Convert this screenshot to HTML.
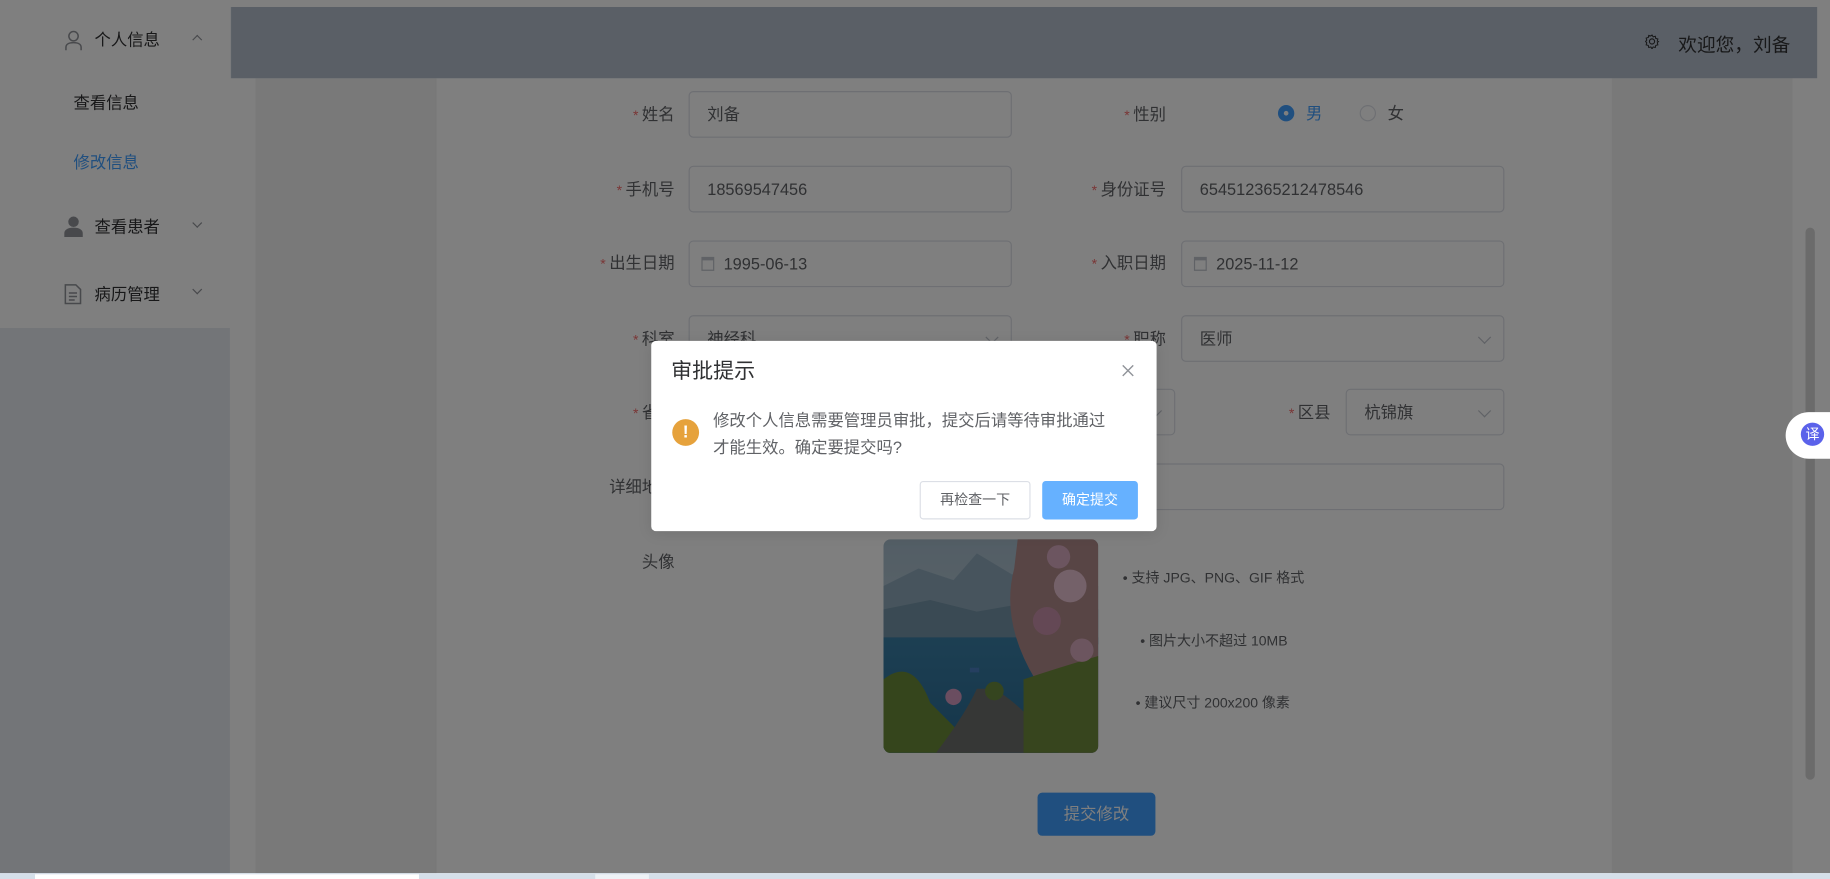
<!DOCTYPE html>
<html><head><meta charset="utf-8"><style>
*{margin:0;padding:0;box-sizing:border-box}
html,body{width:1830px;height:879px;overflow:hidden;background:#fff}
body{font-family:"Liberation Sans","Noto Sans CJK SC",sans-serif;color:#303133}
#w{position:absolute;left:0;top:0;width:1568px;height:753px;transform:scale(1.16709,1.16733);transform-origin:0 0;overflow:hidden}
.a{position:absolute}
.lab{position:absolute;font-size:14px;color:#606266;text-align:right;width:120px;line-height:20px}
.lab b{color:#f56c6c;font-weight:normal;margin-right:3px;font-size:12px}
.in{position:absolute;height:40px;border:1px solid #dcdfe6;border-radius:4px;background:#fff;font-size:14px;color:#606266;line-height:38px;padding-left:15px}
.arr{position:absolute;right:12px;top:14px;width:8px;height:8px;border-right:1px solid #c0c4cc;border-bottom:1px solid #c0c4cc;transform:rotate(45deg)}
.cal{display:inline-block;width:11px;height:12px;border:1px solid #c0c4cc;border-top-width:3px;margin:0 8px 0 -5px;vertical-align:-1px}
.nav{position:absolute;font-size:14px;color:#303133;line-height:20px}
.chev{position:absolute;width:6px;height:6px;border-right:1px solid #909399;border-bottom:1px solid #909399}
.tip{position:absolute;font-size:12px;color:#606266}
</style></head><body>
<div id="w">
<div class="a" style="left:0;top:0;width:1568px;height:753px;background:#f5f7fa"></div>
<div class="a" style="left:0;top:0;width:1568px;height:6px;background:#fff"></div>
<div class="a" style="left:0;top:6px;width:197px;height:275px;background:#fff"></div>
<div class="a" style="left:0;top:281px;width:197px;height:472px;background:#e6ebf1"></div>
<div class="a" style="left:197px;top:67px;width:22px;height:686px;background:#fff"></div>
<div class="a" style="left:219px;top:67px;width:154px;height:686px;background:#f2f2f2"></div>
<div class="a" style="left:1381px;top:67px;width:155px;height:686px;background:#f2f2f2"></div>
<div class="a" style="left:1536px;top:6px;width:32px;height:747px;background:#fff"></div>
<div class="a" style="left:373px;top:67px;width:1008px;height:686px;background:#fff;border-left:1px solid #eee"></div>
<div class="a" style="left:198px;top:6px;width:1359px;height:61px;background:#b4bfcd"></div>
<svg class="a" style="left:1409px;top:29px" width="13" height="13" viewBox="0 0 13 13"><circle cx="6.5" cy="6.5" r="2.2" fill="none" stroke="#303133" stroke-width="1"/><path d="M6.5 1l1 1.6 1.8-.5.4 1.8 1.8.5-.5 1.8L12 6.5l-1 1.1.5 1.8-1.8.5-.4 1.8-1.8-.5-1 1.6-1-1.6-1.8.5-.4-1.8-1.8-.5.5-1.8L1 6.5l1-1.1-.5-1.8 1.8-.5.4-1.8 1.8.5z" fill="none" stroke="#303133" stroke-width="0.9"/></svg>
<div class="a" style="left:1438px;top:25px;font-size:16px;color:#303133">欢迎您，刘备</div>
<div class="a" style="left:1547px;top:195px;width:8px;height:473px;border-radius:4px;background:#d6d6d6"></div>

<svg class="a" style="left:55px;top:26px" width="16" height="18" viewBox="0 0 16 18"><circle cx="8" cy="5" r="4" fill="none" stroke="#909399" stroke-width="1.3"/><path d="M1.5 17v-2.5c0-2.5 2.5-4 6.5-4s6.5 1.5 6.5 4V17" fill="none" stroke="#909399" stroke-width="1.3"/></svg>
<div class="nav" style="left:81px;top:24px">个人信息</div>
<div class="chev" style="left:166px;top:31px;transform:rotate(-135deg)"></div>
<div class="nav" style="left:63px;top:78px">查看信息</div>
<div class="nav" style="left:63px;top:129px;color:#409eff">修改信息</div>
<svg class="a" style="left:55px;top:185px" width="16" height="18" viewBox="0 0 16 18"><circle cx="8" cy="5" r="4.5" fill="#909399"/><path d="M0 18v-3c0-3 3-5 8-5s8 2 8 5v3z" fill="#909399"/></svg>
<div class="nav" style="left:81px;top:184px">查看患者</div>
<div class="chev" style="left:166px;top:188px;transform:rotate(45deg)"></div>
<svg class="a" style="left:55px;top:243px" width="15" height="18" viewBox="0 0 15 18"><path d="M1 1h9l4 4v12H1z" fill="none" stroke="#909399" stroke-width="1.3"/><path d="M4 8h7M4 11h7M4 14h5" stroke="#909399" stroke-width="1.2"/></svg>
<div class="nav" style="left:81px;top:242px">病历管理</div>
<div class="chev" style="left:166px;top:245px;transform:rotate(45deg)"></div>

<div class="lab" style="left:458px;top:88px"><b>*</b>姓名</div>
<div class="in" style="left:590px;top:78px;width:277px">刘备</div>
<div class="lab" style="left:879px;top:88px"><b>*</b>性别</div>
<div class="a" style="left:1095px;top:90px;width:14px;height:14px;border-radius:50%;background:#409eff"><div class="a" style="left:5px;top:5px;width:4px;height:4px;border-radius:50%;background:#fff"></div></div>
<div class="a" style="left:1119px;top:87px;font-size:14px;color:#409eff">男</div>
<div class="a" style="left:1165px;top:90px;width:14px;height:14px;border-radius:50%;border:1px solid #dcdfe6;background:#fff"></div>
<div class="a" style="left:1189px;top:87px;font-size:14px;color:#606266">女</div>

<div class="lab" style="left:458px;top:152px"><b>*</b>手机号</div>
<div class="in" style="left:590px;top:142px;width:277px">18569547456</div>
<div class="lab" style="left:879px;top:152px"><b>*</b>身份证号</div>
<div class="in" style="left:1012px;top:142px;width:277px">654512365212478546</div>

<div class="lab" style="left:458px;top:215px"><b>*</b>出生日期</div>
<div class="in" style="left:590px;top:206px;width:277px"><span class="cal"></span>1995-06-13</div>
<div class="lab" style="left:879px;top:215px"><b>*</b>入职日期</div>
<div class="in" style="left:1012px;top:206px;width:277px"><span class="cal"></span>2025-11-12</div>

<div class="lab" style="left:458px;top:280px"><b>*</b>科室</div>
<div class="in" style="left:590px;top:270px;width:277px">神经科<div class="arr"></div></div>
<div class="lab" style="left:879px;top:280px"><b>*</b>职称</div>
<div class="in" style="left:1012px;top:270px;width:277px">医师<div class="arr"></div></div>

<div class="lab" style="left:458px;top:343px"><b>*</b>省份</div>
<div class="in" style="left:590px;top:333px;width:417px">新疆<div class="arr"></div></div>
<div class="lab" style="left:1020px;top:343px"><b>*</b>区县</div>
<div class="in" style="left:1153px;top:333px;width:136px">杭锦旗<div class="arr"></div></div>

<div class="lab" style="left:458px;top:407px">详细地址</div>
<div class="in" style="left:590px;top:397px;width:699px"></div>

<div class="lab" style="left:458px;top:471px">头像</div>
<svg class="a" style="left:757px;top:462px" width="184" height="183" viewBox="0 0 184 183">
<defs><clipPath id="c"><rect width="184" height="183" rx="6"/></clipPath>
<linearGradient id="sky" x1="0" y1="0" x2="0" y2="1"><stop offset="0" stop-color="#a6bccb"/><stop offset="1" stop-color="#c5d2da"/></linearGradient>
<linearGradient id="sea" x1="0" y1="0" x2="0" y2="1"><stop offset="0" stop-color="#3a7fa6"/><stop offset="1" stop-color="#2a6b95"/></linearGradient></defs>
<g clip-path="url(#c)">
<rect width="184" height="183" fill="url(#sky)"/>
<path d="M0 40 L30 25 L60 35 L80 12 L110 30 L140 25 L184 40 V90 H0z" fill="#8fa9bb"/>
<path d="M0 60 L40 52 L80 62 L120 55 L184 60 V90 H0z" fill="#7594a8"/>
<rect y="84" width="184" height="100" fill="url(#sea)"/>
<path d="M0 120 Q25 100 40 140 L60 160 L80 183 H0z" fill="#6a8a38"/>
<path d="M45 183 Q70 150 80 128 L95 128 Q130 150 145 183z" fill="#6d6e6c"/>
<path d="M115 0 L184 0 V183 H150 Q140 140 130 120 Q100 70 112 25z" fill="#b08a8a"/>
<path d="M120 120 Q150 110 184 100 V183 H120z" fill="#6f8a3c"/>
<circle cx="160" cy="40" r="14" fill="#e8c2d2"/><circle cx="140" cy="70" r="12" fill="#c990aa"/><circle cx="170" cy="95" r="10" fill="#d9abbf"/><circle cx="150" cy="15" r="10" fill="#d8aac0"/>
<circle cx="60" cy="135" r="7" fill="#d59ac0"/>
<circle cx="95" cy="130" r="8" fill="#6b8a3e"/>
<rect x="74" y="110" width="8" height="4" fill="#4a7fc0"/>
</g></svg>
<div class="tip" style="left:962px;top:486px">• 支持 JPG、PNG、GIF 格式</div>
<div class="tip" style="left:977px;top:540px">• 图片大小不超过 10MB</div>
<div class="tip" style="left:973px;top:593px">• 建议尺寸 200x200 像素</div>
<div class="a" style="left:889px;top:679px;width:101px;height:37px;border-radius:4px;background:#409eff;color:#fff;font-size:14px;text-align:center;line-height:37px">提交修改</div>

<div class="a" style="left:0;top:0;width:1568px;height:748px;background:rgba(0,0,0,0.5)"></div>

<div class="a" style="left:0;top:748px;width:1568px;height:5px;background:#d5dfe9"></div>
<div class="a" style="left:30px;top:749px;width:329px;height:4px;background:#fff"></div>
<div class="a" style="left:510px;top:749px;width:46px;height:4px;background:#eef2f6"></div>
<div class="a" style="left:1530px;top:353px;width:40px;height:40px;border-radius:20px 0 0 20px;background:#fff"></div>
<div class="a" style="left:1543px;top:362px;width:20px;height:20px;border-radius:50%;background:#5b62ea;color:#fff;font-size:12px;text-align:center;line-height:20px">译</div>

<div class="a" style="left:558px;top:292px;width:433px;height:163px;background:#fff;border-radius:4px;box-shadow:0 2px 12px rgba(0,0,0,.1)"></div>
<div class="a" style="left:575px;top:306px;font-size:18px;color:#303133;line-height:24px">审批提示</div>
<svg class="a" style="left:961px;top:312px" width="11" height="11" viewBox="0 0 11 11"><path d="M1 1L10 10M10 1L1 10" stroke="#909399" stroke-width="1.2"/></svg>
<div class="a" style="left:576px;top:359px;width:23px;height:23px;border-radius:50%;background:#e6a23c;color:#fff;font-size:15px;font-weight:bold;text-align:center;line-height:23px">!</div>
<div class="a" style="left:611px;top:349px;width:345px;font-size:14px;color:#606266;line-height:23px">修改个人信息需要管理员审批，提交后请等待审批通过才能生效。确定要提交吗?</div>
<div class="a" style="left:788px;top:412px;width:95px;height:33px;border:1px solid #dcdfe6;border-radius:3px;background:#fff;font-size:12px;color:#606266;text-align:center;line-height:31px">再检查一下</div>
<div class="a" style="left:893px;top:412px;width:82px;height:33px;border-radius:3px;background:#66b1ff;font-size:12px;color:#fff;text-align:center;line-height:33px">确定提交</div>
</div>
</body></html>
